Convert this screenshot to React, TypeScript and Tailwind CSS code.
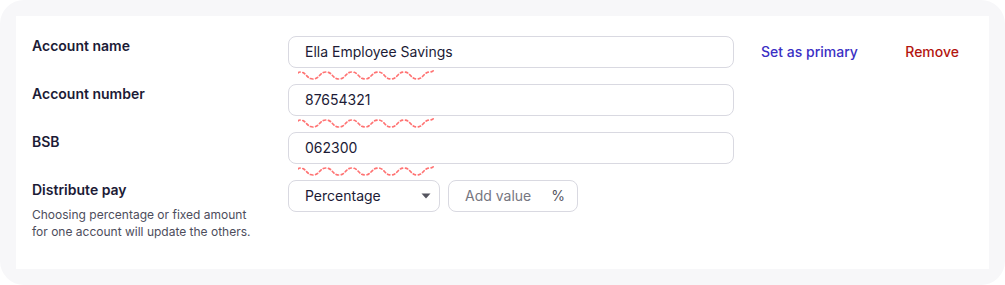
import React from 'react';

// wavy dashed underline, drawn from crest to trough
const wave = (() => {
  let d = 'M0 4 C1 3 1.5 3 2 3';
  for (let i = 0; i < 10; i++) {
    const x = 2 + i * 13;
    const up = i % 2 === 0;
    const y0 = up ? 3 : 10;
    const y1 = up ? 10 : 3;
    d += ` C${x + 6.5} ${y0} ${x + 6.5} ${y1} ${x + 13} ${y1}`;
  }
  return d + ' C134 3 135 2 136 1';
})();

const Squiggle = () => (
  <svg
    className="absolute left-[10px] top-[33px] pointer-events-none"
    width="138"
    height="13"
    viewBox="0 0 138 13"
    fill="none"
  >
    <path
      d={wave}
      stroke="#ff5a5a"
      strokeWidth="1.7"
      strokeDasharray="2.4 2.6"
      strokeLinecap="round"
      opacity="0.85"
    />
  </svg>
);

interface FieldRowProps {
  label: string;
  value: string;
  children?: React.ReactNode;
}

const FieldRow: React.FC<FieldRowProps> = ({ label, value, children }) => (
  <div className="flex items-start">
    <div className="w-64 shrink-0 text-sm leading-5 font-semibold text-[#1c1b36]">{label}</div>
    <div className="relative">
      <div className="w-[446px] h-8 rounded-lg border border-[#d9d9e1] bg-white flex items-center px-4 text-sm text-[#1c1b36]">
        {value}
      </div>
      <Squiggle />
    </div>
    {children}
  </div>
);

export default function App() {
  return (
    <div className="w-[1005px] h-[285px] bg-white" style={{ fontFamily: 'Inter, "Noto Sans", sans-serif' }}>
      <div className="h-full rounded-3xl bg-[#f7f7f9] p-4">
        <div className="h-full bg-white pl-4 pr-[30px] pt-5 flex flex-col gap-4">
          <FieldRow label="Account name" value="Ella Employee Savings">
            <div className="flex-1 flex justify-between items-center h-8 pl-[27px] text-sm font-medium">
              <button type="button" className="text-[#3b2fc4]">Set as primary</button>
              <button type="button" className="text-[#b3150f]">Remove</button>
            </div>
          </FieldRow>
          <FieldRow label="Account number" value="87654321" />
          <FieldRow label="BSB" value="062300" />

          <div className="flex items-start">
            <div className="w-64 shrink-0">
              <div className="text-sm leading-5 font-semibold text-[#1c1b36]">Distribute pay</div>
              <p className="mt-[6px] text-xs leading-[17px] text-[#4d4d5c] max-w-[224px]">
                Choosing percentage or fixed amount for one account will update the others.
              </p>
            </div>
            <div className="flex gap-2">
              <div className="w-[152px] h-8 rounded-lg border border-[#d9d9e1] bg-white flex items-center justify-between pl-4 pr-[8px] text-sm text-[#1c1b36]">
                <span>Percentage</span>
                <svg width="10" height="6" viewBox="0 0 10 6">
                  <path d="M0.5 0.5 H9.5 L5 5.5 Z" fill="#55555f" />
                </svg>
              </div>
              <div className="w-[130px] h-8 rounded-lg border border-[#d9d9e1] bg-white flex items-center justify-between pl-4 pr-3 text-sm text-[#76767f]">
                <span>Add value</span>
                <span className="text-[#55555f]">%</span>
              </div>
            </div>
          </div>
        </div>
      </div>
    </div>
  );
}
